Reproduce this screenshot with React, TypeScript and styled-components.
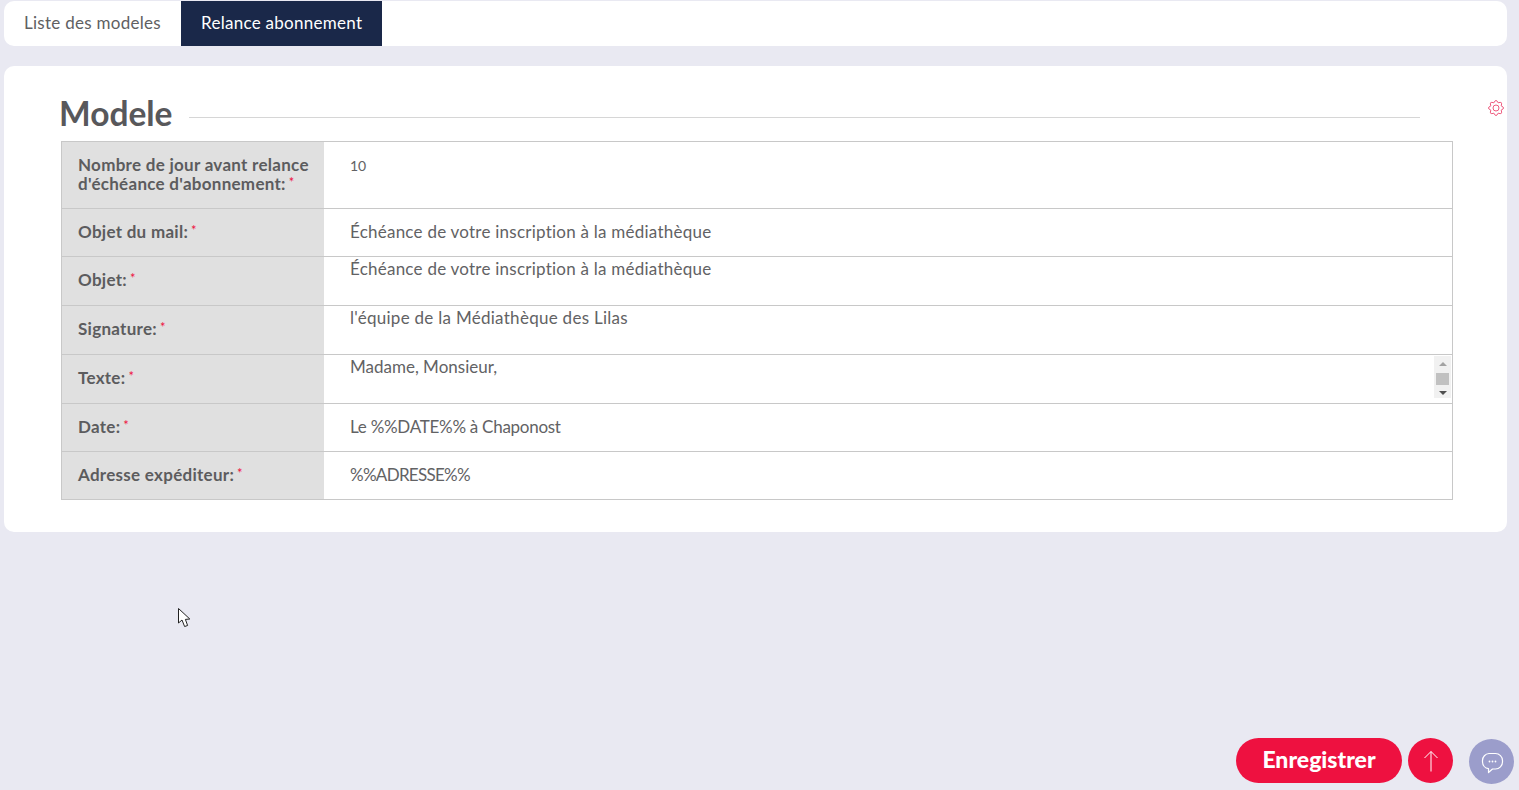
import React from 'react';
import styled, { createGlobalStyle } from 'styled-components';

type Field = {
  label: string[];
  value: string;
  height: number;
  top?: number;
  small?: boolean;
  scroll?: boolean;
  spacing?: number;
};

const fields: Field[] = [
  { label: ['Nombre de jour avant relance', "d'échéance d'abonnement:"], value: '10', height: 67, top: 14, small: true },
  { label: ['Objet du mail:'], value: 'Échéance de votre inscription à la médiathèque', height: 48, spacing: 0.24 },
  { label: ['Objet:'], value: 'Échéance de votre inscription à la médiathèque', height: 49, top: 2, spacing: 0.24 },
  { label: ['Signature:'], value: "l'équipe de la Médiathèque des Lilas", height: 49, top: 2, spacing: 0.28 },
  { label: ['Texte:'], value: 'Madame, Monsieur,', height: 49, top: 2, scroll: true },
  { label: ['Date:'], value: 'Le %%DATE%% à Chaponost', height: 48, spacing: -0.27 },
  { label: ['Adresse expéditeur:'], value: '%%ADRESSE%%', height: 48, spacing: -0.7 },
];

// 8 lobed outline of the settings gear
const gearPath = (): string => {
  const lobes = 8;
  const cx = 8;
  const cy = 8;
  let d = '';
  for (let i = 0; i < lobes; i++) {
    const a = ((i + 0.5) * 2 * Math.PI) / lobes;
    const b = ((i + 1.5) * 2 * Math.PI) / lobes;
    const x1 = cx + 5.6 * Math.cos(a);
    const y1 = cy + 5.6 * Math.sin(a);
    const x2 = cx + 5.6 * Math.cos(b);
    const y2 = cy + 5.6 * Math.sin(b);
    const m = (a + b) / 2;
    const qx = cx + 9.9 * Math.cos(m);
    const qy = cy + 9.9 * Math.sin(m);
    d += `${i === 0 ? `M${x1.toFixed(2)} ${y1.toFixed(2)}` : ''}Q${qx.toFixed(2)} ${qy.toFixed(2)} ${x2.toFixed(2)} ${y2.toFixed(2)}`;
  }
  return d + 'Z';
};

const GlobalStyle = createGlobalStyle`
  html, body {
    margin: 0;
    padding: 0;
    background: #e9e9f2;
    font-family: "Lato", "Open Sans", sans-serif;
    color: #5a5a5c;
  }
`;

const Page = styled.div`
  position: relative;
  height: 790px;
  overflow: hidden;
  padding: 1px 12px 0 4px;
  box-sizing: border-box;
`;

const TabBar = styled.div`
  display: flex;
  height: 45px;
  background: #fff;
  border-radius: 10px;
  overflow: hidden;
`;

const Tab = styled.div<{ $active?: boolean }>`
  display: flex;
  align-items: center;
  padding: 0 20px 2px;
  font-size: 17px;
  letter-spacing: 0.28px;
  color: ${(p) => (p.$active ? '#fff' : '#606062')};
  background: ${(p) => (p.$active ? '#1a2849' : 'transparent')};
`;

const Card = styled.div`
  position: relative;
  margin-top: 20px;
  height: 466px;
  padding: 24px 54px 0 57px;
  box-sizing: border-box;
  background: #fff;
  border-radius: 10px;
`;

const GearButton = styled.div`
  position: absolute;
  top: 34px;
  right: 3px;
  line-height: 0;
`;

const TitleRow = styled.div`
  display: flex;
  align-items: center;
  height: 47px;
  margin: 0 33px 4px -2px;
`;

const Title = styled.h2`
  margin: 0 0 2px;
  font-size: 33.5px;
  font-weight: 700;
  color: #58585b;
`;

const TitleLine = styled.div`
  flex: 1;
  height: 1px;
  margin: 8px 0 0 16px;
  background: #d6d6d6;
`;

const FormTable = styled.div`
  border: 1px solid #c8c8c8;
  border-bottom: 0;
`;

const Row = styled.div<{ $height: number }>`
  display: flex;
  box-sizing: border-box;
  height: ${(p) => p.$height}px;
  border-bottom: 1px solid #c8c8c8;
`;

const Label = styled.div<{ $lift: number }>`
  display: flex;
  align-items: center;
  box-sizing: border-box;
  width: 262px;
  padding: 0 0 ${(p) => p.$lift}px 16px;
  background: #e0e0e0;
  font-size: 17px;
  letter-spacing: 0.28px;
  line-height: 19px;
  font-weight: 700;
  color: #5c5c5e;
`;

const Required = styled.span`
  margin-left: 3px;
  font-size: 13px;
  line-height: 0;
  vertical-align: 3px;
  font-weight: 400;
  color: #ee1140;
`;

const Value = styled.div<{ $top?: number; $small?: boolean; $spacing?: number }>`
  position: relative;
  flex: 1;
  display: flex;
  align-items: ${(p) => (p.$top ? 'flex-start' : 'center')};
  padding: ${(p) => p.$top || 0}px 0 ${(p) => (p.$top ? 0 : 2)}px 26px;
  font-size: ${(p) => (p.$small ? 14 : 17)}px;
  letter-spacing: ${(p) => p.$spacing || 0}px;
  line-height: 19px;
  color: #626264;
`;

const ScrollTrack = styled.div`
  position: absolute;
  top: 1px;
  right: 1px;
  width: 17px;
  height: 42px;
  display: flex;
  flex-direction: column;
  align-items: center;
  justify-content: space-between;
  padding: 6px 0 3px;
  box-sizing: border-box;
  background: #f1f1f1;
`;

const ScrollThumb = styled.div`
  width: 13px;
  height: 12px;
  background: #c1c1c1;
`;

const ScrollArrow = styled.div<{ $up?: boolean }>`
  width: 0;
  height: 0;
  border-left: 4px solid transparent;
  border-right: 4px solid transparent;
  ${(p) => (p.$up ? 'border-bottom: 4px solid #a3a3a3;' : 'border-top: 4px solid #505050;')}
`;

const Cursor = styled.svg`
  position: absolute;
  left: 178px;
  top: 608px;
`;

const FloatingBar = styled.div`
  position: fixed;
  right: 5px;
  bottom: 7px;
  display: flex;
  align-items: flex-end;
`;

const SaveButton = styled.div`
  display: flex;
  align-items: center;
  justify-content: center;
  box-sizing: border-box;
  width: 166px;
  height: 45px;
  padding-bottom: 3px;
  border-radius: 23px;
  background: #ee1140;
  color: #fff;
  font-size: 23px;
  font-weight: 900;
`;

const UpButton = styled.div`
  display: flex;
  align-items: center;
  justify-content: center;
  width: 45px;
  height: 45px;
  margin-left: 6px;
  border-radius: 50%;
  background: #ee1140;
`;

const ChatButton = styled.div`
  display: flex;
  align-items: center;
  justify-content: center;
  width: 45px;
  height: 45px;
  margin-left: 16px;
  margin-bottom: -1px;
  border-radius: 50%;
  background: #9b9dcb;
`;

const App: React.FC = () => {
  return (
    <Page>
      <GlobalStyle />
      <TabBar>
        <Tab>Liste des modeles</Tab>
        <Tab $active>Relance abonnement</Tab>
      </TabBar>
      <Card>
        <GearButton>
          <svg width="16" height="16" viewBox="0 0 16 16" fill="none" stroke="#ee5a7e" strokeWidth="1">
            <path d={gearPath()} />
            <circle cx="8" cy="8" r="3" />
          </svg>
        </GearButton>
        <TitleRow>
          <Title>Modele</Title>
          <TitleLine />
        </TitleRow>
        <FormTable>
          {fields.map((field) => (
            <Row key={field.label[0]} $height={field.height}>
              <Label $lift={field.top === 2 ? 4 : 2}>
                <span>
                  {field.label.map((line, i) => (
                    <React.Fragment key={line}>
                      {line}
                      {i < field.label.length - 1 ? <br /> : null}
                    </React.Fragment>
                  ))}
                  <Required>*</Required>
                </span>
              </Label>
              <Value $top={field.top} $small={field.small} $spacing={field.spacing}>
                {field.value}
                {field.scroll && (
                  <ScrollTrack>
                    <ScrollArrow $up />
                    <ScrollThumb />
                    <ScrollArrow />
                  </ScrollTrack>
                )}
              </Value>
            </Row>
          ))}
        </FormTable>
      </Card>
      <Cursor width="14" height="20" viewBox="0 0 14 20">
        <path d="M0.5 0.5 L0.5 15 L4 12 L6.6 18.5 L9.6 17.5 L7.4 11.4 L11.8 11 Z" fill="#fff" stroke="#222" strokeWidth="1" />
      </Cursor>
      <FloatingBar>
        <SaveButton>Enregistrer</SaveButton>
        <UpButton>
          <svg width="30" height="30" viewBox="0 0 30 30" fill="none" stroke="#fff" strokeWidth="1">
            <path d="M15 5.5V25.5M8.5 12L15 5.5L21.5 12" />
          </svg>
        </UpButton>
        <ChatButton>
          <svg width="24" height="24" viewBox="0 0 24 24" fill="none">
            <path
              d="M9 3.5h6.5a7 7 0 0 1 7 7v1.5a7 7 0 0 1-7 7h-3l-4 3.5v-3.8a7 7 0 0 1-6-6.7v-1.5a7 7 0 0 1 6.5-7z"
              stroke="#fff"
              strokeWidth="1.2"
              strokeLinejoin="round"
            />
            <circle cx="9.5" cy="11.5" r="0.9" fill="#fff" />
            <circle cx="12.5" cy="11.5" r="0.9" fill="#fff" />
            <circle cx="15.5" cy="11.5" r="0.9" fill="#fff" />
          </svg>
        </ChatButton>
      </FloatingBar>
    </Page>
  );
};

export default App;
